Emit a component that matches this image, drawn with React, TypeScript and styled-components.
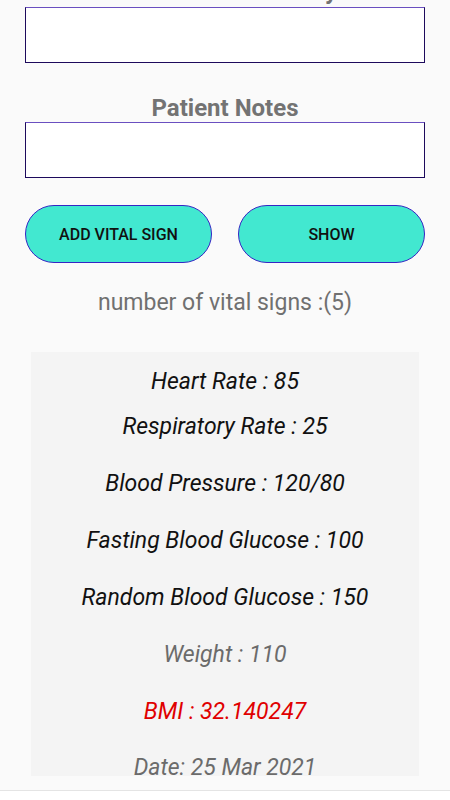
import React from "react";
import styled, { createGlobalStyle } from "styled-components";

const Global = createGlobalStyle`
  html, body {
    margin: 0;
    padding: 0;
    background: #fafafa;
    overflow: hidden;
    font-family: Roboto, "Liberation Sans", sans-serif;
  }
`;

const Screen = styled.div`
  height: 800px;
  display: flex;
  flex-direction: column;
  overflow: hidden;
`;

const Scroll = styled.div`
  flex: 1;
  overflow: hidden;
  display: flex;
  flex-direction: column;
  padding: 0 25px;
`;

const Label = styled.div<{ $first?: boolean }>`
  font-size: 24px;
  line-height: 28px;
  font-weight: 700;
  color: #737373;
  text-align: center;
  margin-top: ${(p) => (p.$first ? "-23px" : "31px")};
  margin-bottom: ${(p) => (p.$first ? "2px" : "0px")};
`;

const Field = styled.div`
  height: 56px;
  flex-shrink: 0;
  box-sizing: border-box;
  background: #ffffff;
  border: 1px solid #1d0a5c;
  border-top-color: #6a4fc0;
`;

const Buttons = styled.div`
  display: grid;
  grid-template-columns: 1fr 1fr;
  column-gap: 26px;
  margin-top: 27px;
`;

const Pill = styled.button`
  height: 58px;
  box-sizing: border-box;
  border-radius: 30px;
  border: 1px solid #3525c4;
  background: #42e8d0;
  color: #111111;
  font-family: Roboto, "Liberation Sans", sans-serif;
  font-size: 16px;
  font-weight: 500;
  padding: 0;
`;

const Count = styled.div`
  margin-top: 26px;
  text-align: center;
  font-size: 23px;
  line-height: 27px;
  color: #707070;
`;

const Card = styled.div`
  margin: 36px 6px 0;
  height: 424px;
  flex-shrink: 0;
  box-sizing: border-box;
  background: #f4f4f4;
  overflow: hidden;
  padding-top: 16px;
  display: flex;
  flex-direction: column;
  align-items: center;
`;

const Item = styled.div<{ $gap: number; $color: string }>`
  margin-top: ${(p) => p.$gap}px;
  font-size: 23px;
  line-height: 27px;
  font-style: italic;
  color: ${(p) => p.$color};
  white-space: nowrap;
`;

const Footer = styled.div`
  height: 9px;
  flex-shrink: 0;
  background: #ffffff;
  border-top: 1px solid #e4e4e4;
`;

const items = [
  { text: "Heart Rate : 85", gap: 0, color: "#111111" },
  { text: "Respiratory Rate : 25", gap: 18, color: "#111111" },
  { text: "Blood Pressure : 120/80", gap: 30, color: "#111111" },
  { text: "Fasting Blood Glucose : 100", gap: 30, color: "#111111" },
  { text: "Random Blood Glucose : 150", gap: 30, color: "#111111" },
  { text: "Weight : 110", gap: 30, color: "#6b6b6b" },
  { text: "BMI : 32.140247", gap: 30, color: "#e00000" },
  { text: "Date: 25 Mar 2021", gap: 29, color: "#6b6b6b" },
];

export default function App() {
  return (
    <Screen>
      <Global />
      <Scroll>
        <Label $first>Past Medical History</Label>
        <Field />
        <Label>Patient Notes</Label>
        <Field />
        <Buttons>
          <Pill>ADD VITAL SIGN</Pill>
          <Pill>SHOW</Pill>
        </Buttons>
        <Count>number of vital signs :(5)</Count>
        <Card>
          {items.map((it) => (
            <Item key={it.text} $gap={it.gap} $color={it.color}>
              {it.text}
            </Item>
          ))}
        </Card>
      </Scroll>
      <Footer />
    </Screen>
  );
}
